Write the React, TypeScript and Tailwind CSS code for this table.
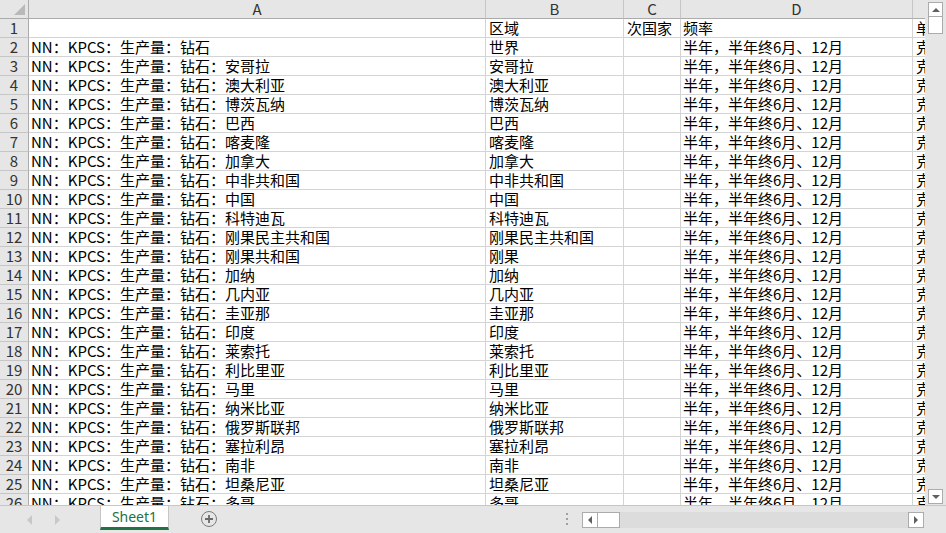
import React from "react";

const places = [
  "安哥拉", "澳大利亚", "博茨瓦纳", "巴西", "喀麦隆", "加拿大", "中非共和国", "中国", "科特迪瓦",
  ["刚果民主共和国", "刚果民主共和国"], ["刚果共和国", "刚果"], "加纳", "几内亚", "圭亚那", "印度",
  "莱索托", "利比里亚", "马里", "纳米比亚", "俄罗斯联邦", "塞拉利昂", "南非", "坦桑尼亚", "多哥",
];

type Row = { a: string; b: string; c: string; d: string; e: string };

const rows: Row[] = [
  { a: "", b: "区域", c: "次国家", d: "频率", e: "单" },
  { a: "NN：KPCS：生产量：钻石", b: "世界", c: "", d: "半年，半年终6月、12月", e: "克" },
  ...places.map((p) => {
    const [a, b] = Array.isArray(p) ? p : [p, p];
    return { a: "NN：KPCS：生产量：钻石：" + a, b, c: "", d: "半年，半年终6月、12月", e: "克" };
  }),
];

const font = { fontFamily: '"Noto Sans CJK SC", "Noto Sans", sans-serif' };

export default function App() {
  return (
    <div className="w-[946px] h-[533px] overflow-hidden bg-[#e6e6e6] flex flex-col text-[15px]" style={font}>
      <div className="h-[505px] flex">
        {/* sheet */}
        <div className="w-[925px] h-[505px] overflow-hidden bg-white">
          <div className="grid grid-cols-[29px_457px_138px_57px_232px_12px] auto-rows-[19px] leading-[18px]">
            {/* header row */}
            <div className="relative bg-[#e6e6e6] border-r border-b border-[#ababab]">
              <div className="absolute right-[3px] bottom-[3px] w-0 h-0 border-l-[11px] border-l-transparent border-b-[11px] border-b-[#b9b9b9]" />
            </div>
            {["A", "B", "C", "D", ""].map((h, i) => (
              <div
                key={i}
                className={`bg-[#e6e6e6] border-b border-[#ababab] text-center text-[#333] overflow-hidden ${i < 4 ? "border-r border-r-[#c6c6c6]" : ""}`}
              >
                {h}
              </div>
            ))}
            {rows.map((r, i) => (
              <React.Fragment key={i}>
                <div className="bg-[#e6e6e6] border-r border-r-[#ababab] border-b border-b-[#c6c6c6] text-center text-[#333]">
                  {i + 1}
                </div>
                <div className="border-r border-b border-[#d4d4d4] pl-[2px] whitespace-nowrap overflow-hidden text-black">{r.a}</div>
                <div className="border-r border-b border-[#d4d4d4] pl-[3px] whitespace-nowrap overflow-hidden text-black">{r.b}</div>
                <div className="border-r border-b border-[#d4d4d4] pl-[3px] whitespace-nowrap overflow-hidden text-black">{r.c}</div>
                <div className="border-r border-b border-[#d4d4d4] pl-[2px] whitespace-nowrap overflow-hidden text-black">{r.d}</div>
                <div className="border-b border-[#d4d4d4] pl-[3px] whitespace-nowrap overflow-hidden text-black">{r.e}</div>
              </React.Fragment>
            ))}
          </div>
        </div>
        {/* vertical scrollbar */}
        <div className="w-[21px] h-[505px] bg-[#e6e6e6] flex flex-col pl-[3px] pt-[2px] pb-[1px]">
          <div className="w-[15px] h-[15px] bg-white border border-[#ababab] flex items-center justify-center">
            <div className="w-0 h-0 border-l-[4px] border-r-[4px] border-b-[4px] border-l-transparent border-r-transparent border-b-[#606060]" />
          </div>
          <div className="w-[15px] h-[17px] bg-white border border-[#ababab] border-t-0" />
          <div className="flex-1" />
          <div className="w-[15px] h-[15px] bg-white border border-[#ababab] flex items-center justify-center">
            <div className="w-0 h-0 border-l-[4px] border-r-[4px] border-t-[4px] border-l-transparent border-r-transparent border-t-[#606060]" />
          </div>
        </div>
      </div>
      {/* bottom bar */}
      <div className="h-[28px] border-t border-[#c6c6c6] flex items-start relative">
        <div className="w-[100px] h-[27px] flex items-center">
          <div className="ml-[27px] w-0 h-0 border-t-[5px] border-b-[5px] border-r-[5px] border-t-transparent border-b-transparent border-r-[#c8c8c8]" />
          <div className="ml-[23px] w-0 h-0 border-t-[5px] border-b-[5px] border-l-[5px] border-t-transparent border-b-transparent border-l-[#c8c8c8]" />
        </div>
        <div className="w-[69px] h-[24px] bg-white border-l border-r border-[#c6c6c6] border-b-[3px] border-b-[#217346] flex items-center justify-center text-[#217346] text-[14px] leading-none" style={{ fontFamily: '"Noto Sans", sans-serif' }}>
          Sheet1
        </div>
        <div className="ml-[32px] mt-[5px] w-[16px] h-[16px] rounded-full border-[1.5px] border-[#7a7a7a] flex items-center justify-center text-[#6a6a6a]">
          <svg width="10" height="10" viewBox="0 0 10 10">
            <path d="M5 1v8M1 5h8" stroke="#6a6a6a" strokeWidth="1.8" />
          </svg>
        </div>
        <div className="ml-[349px] mt-[7px] flex flex-col gap-[3px]">
          <div className="w-[2px] h-[2px] bg-[#a0a0a0]" />
          <div className="w-[2px] h-[2px] bg-[#a0a0a0]" />
          <div className="w-[2px] h-[2px] bg-[#a0a0a0]" />
        </div>
        <div className="ml-[14px] mt-[6px] w-[342px] h-[16px] flex bg-[#dcdcdc]">
          <div className="w-[16px] h-[16px] bg-white border border-[#ababab] flex items-center justify-center">
            <div className="w-0 h-0 border-t-[4px] border-b-[4px] border-r-[4px] border-t-transparent border-b-transparent border-r-[#606060]" />
          </div>
          <div className="w-[22px] h-[16px] bg-white border border-[#ababab] border-l-0" />
          <div className="flex-1" />
          <div className="w-[16px] h-[16px] bg-white border border-[#ababab] flex items-center justify-center">
            <div className="w-0 h-0 border-t-[4px] border-b-[4px] border-l-[4px] border-t-transparent border-b-transparent border-l-[#606060]" />
          </div>
        </div>
      </div>
    </div>
  );
}
